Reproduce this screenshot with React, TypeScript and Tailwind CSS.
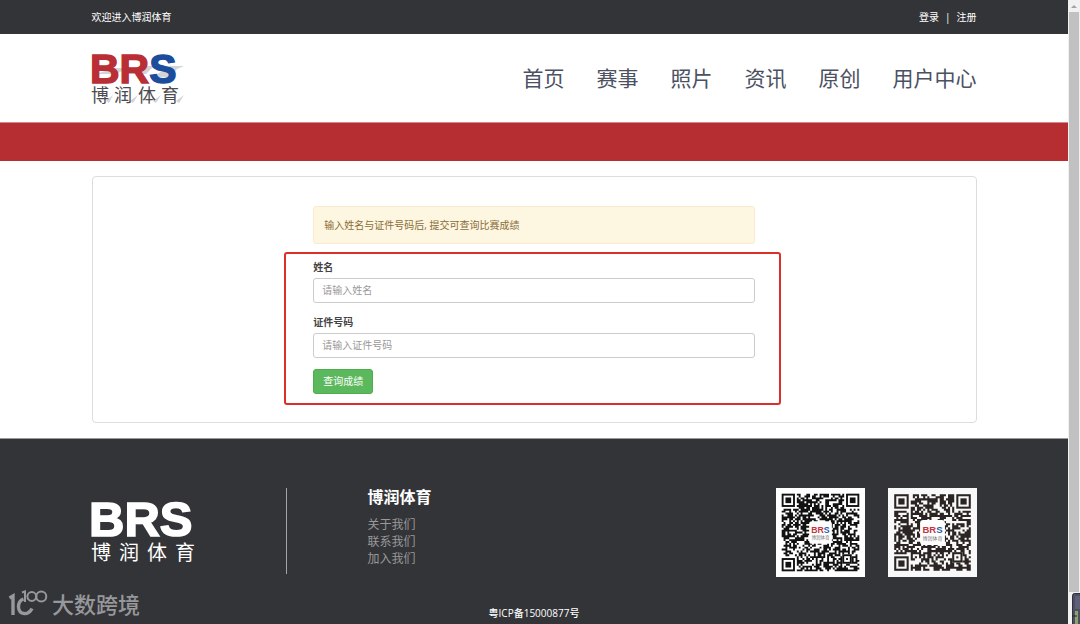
import React, { useMemo } from 'react';

const NAV_ITEMS = ['首页', '赛事', '照片', '资讯', '原创', '用户中心'];
const ABOUT_LINKS = ['关于我们', '联系我们', '加入我们'];
const LATIN = '"Liberation Sans", sans-serif';
const LOGO_CJK = '"Liberation Sans", "Noto Sans CJK SC", sans-serif';

const HeaderLogo: React.FC = () => (
  <svg className="-ml-1 block" width="100" height="70" viewBox="-4 -7 100 70" role="img" aria-label="博润体育">
    <g fill="#d3d4d8">
      <path d="M4 24 L22 18 H36 L24 24Z M34 24 L50 16 H62 L54 24Z M62 26 L78 16 H92 L85 19 L78 27 H64Z" />
      <path d="M14 51 L21 45 L17 53Z M38 51 L46 45 L41 53Z M61 51 L69 45 L64 53Z M84 51 L92 45 L87 53Z" />
    </g>
    <text x="-2" y="33" fontFamily={LATIN} fontSize="41" fontWeight="700" strokeWidth="1.4">
      <tspan fill="#b92f35" stroke="#b92f35">BR</tspan>
      <tspan fill="#1c4c9c" stroke="#1c4c9c">S</tspan>
    </text>
    <g fontFamily={LOGO_CJK} fontSize="18" fill="#4c4c50">
      <text x="-1" y="52">博</text>
      <text x="22" y="52">润</text>
      <text x="46" y="52">体</text>
      <text x="69" y="52">育</text>
    </g>
  </svg>
);

const FooterLogo: React.FC = () => (
  <svg className="-ml-1 block" width="112" height="82" viewBox="-4 -6 112 82" role="img" aria-label="博润体育" fill="#fff">
    <text x="-3" y="40" fontFamily={LATIN} fontSize="49" fontWeight="700" stroke="#fff" strokeWidth="1.6">BRS</text>
    <g fontFamily={LOGO_CJK} fontSize="20">
      <text x="-1" y="64">博</text>
      <text x="27" y="64">润</text>
      <text x="55" y="64">体</text>
      <text x="83" y="64">育</text>
    </g>
  </svg>
);

type QrCodeProps = { size: number; seed: number; color: string; background: string; label: string };

const buildModules = (size: number, seed: number) => {
  let state = seed;
  let d = '';
  const mid = (size - 1) / 2;
  for (let y = 0; y < size; y++) {
    for (let x = 0; x < size; x++) {
      state = (Math.imul(state, 1664525) + 1013904223) >>> 0;
      const inFinder = (x < 8 && y < 8) || (x > size - 9 && y < 8) || (x < 8 && y > size - 9);
      const inLogo = Math.abs(x - mid) < 6 && Math.abs(y - mid) < 6;
      const inAlign = Math.abs(x - (size - 7)) < 3 && Math.abs(y - (size - 7)) < 3;
      if (inFinder || inLogo || inAlign) continue;
      if ((state >>> 24) % 100 < 54) d += `M${x} ${y}h1v1h-1z`;
    }
  }
  return d;
};

const QrCode: React.FC<QrCodeProps> = ({ size, seed, color, background, label }) => {
  const modules = useMemo(() => buildModules(size, seed), [size, seed]);
  const full = size + 6;
  const mid = size / 2;
  const corners = [[0, 0], [size - 7, 0], [0, size - 7]];

  return (
    <svg width="89" height="89" viewBox={`-3 -3 ${full} ${full}`} role="img" aria-label={label}>
      <rect x="-3" y="-3" width={full} height={full} fill={background} />
      <path d={modules} fill={color} />
      {corners.map(([x, y]) => (
        <g key={`${x}-${y}`}>
          <rect x={x + 0.5} y={y + 0.5} width="6" height="6" fill="none" stroke={color} />
          <rect x={x + 2} y={y + 2} width="3" height="3" fill={color} />
        </g>
      ))}
      <rect x={size - 8.5} y={size - 8.5} width="4" height="4" fill="none" stroke={color} />
      <rect x={size - 7} y={size - 7} width="1" height="1" fill={color} />
      <rect x={mid - 6} y={mid - 6} width="12" height="12" rx="1.5" fill="#fff" />
      <text x={mid} y={mid + 0.3} textAnchor="middle" fontFamily={LATIN} fontSize="4.6" fontWeight="700">
        <tspan fill="#c4343b">BR</tspan>
        <tspan fill="#2c5aa8">S</tspan>
      </text>
      <text x={mid} y={mid + 3.6} textAnchor="middle" fontFamily={LOGO_CJK} fontSize="2.4" fill="#777">博润体育</text>
    </svg>
  );
};

type FieldProps = { id: string; label: string; placeholder: string };

const Field: React.FC<FieldProps> = ({ id, label, placeholder }) => (
  <div className="mb-[11px]">
    <label htmlFor={id} className="mb-[3px] block text-[10px] leading-4 font-bold text-[#444]">
      {label}
    </label>
    <input
      id={id}
      type="text"
      placeholder={placeholder}
      className="block h-[25px] w-full rounded-[3px] border border-[#ccc] bg-white px-2 pb-0.5 text-[10px] text-[#555] placeholder:text-[#999]"
    />
  </div>
);

const ScrollRail: React.FC = () => (
  <div className="flex w-3 shrink-0 flex-col items-center bg-[#f1f1f1]" aria-hidden="true">
    <svg width="12" height="12" viewBox="0 0 12 12">
      <path d="M3 8 L6 5 L9 8Z" fill="#a3a3a3" />
    </svg>
    <div className="w-[10px] flex-1 bg-[#c1c1c1]" />
    <svg width="12" height="32" viewBox="0 0 12 32">
      <rect x="4.5" y="1.5" width="12" height="34" rx="2" fill="#4c4f62" stroke="#2f313c" />
      <rect x="7" y="4" width="5" height="13" fill="#5d6078" />
      <rect x="7" y="19" width="3" height="13" fill="#8fa06a" />
      <path d="M4 24h5" stroke="#23252e" />
    </svg>
  </div>
);

const Watermark: React.FC = () => (
  <div className="absolute bottom-[5px] left-2 flex items-center gap-1 text-[#97989b]">
    <svg width="40" height="30" viewBox="0 0 40 30" fill="none" stroke="currentColor" aria-hidden="true">
      <path d="M1.5 9 L5 7 V26" strokeWidth="3.4" />
      <path d="M15.5 10 C12.5 11 10.5 14 10.5 18 C11 26.5 20.5 26.5 24 19.5" strokeWidth="3.4" />
      <path d="M14 3.5 L17 2.5 V13" strokeWidth="2" />
      <circle cx="23.8" cy="7.5" r="4.4" strokeWidth="2" />
      <circle cx="33.3" cy="7.5" r="5" strokeWidth="2" />
    </svg>
    <span className="text-[22px] leading-7 font-medium">大数跨境</span>
  </div>
);

const App: React.FC = () => {
  return (
    <div className="relative flex h-screen overflow-hidden bg-white font-['Open_Sans','Noto_Sans_CJK_SC',sans-serif]">
      <div className="flex min-w-0 flex-1 flex-col">
        <div className="bg-[#333438] text-[10px] text-white">
          <div className="mx-auto flex h-[34px] max-w-[885px] items-center justify-between">
            <span>欢迎进入博润体育</span>
            <div className="flex items-center gap-1.5">
              <a href="#login">登录</a>
              <span>|</span>
              <a href="#register">注册</a>
            </div>
          </div>
        </div>

        <header className="mx-auto flex h-[88px] w-full max-w-[885px] shrink-0 items-center justify-between">
          <a href="#home">
            <HeaderLogo />
          </a>
          <nav className="flex gap-8 pt-0.5 text-[21px] font-normal text-[#4b5162]">
            {NAV_ITEMS.map(item => (
              <a key={item} href="#nav">{item}</a>
            ))}
          </nav>
        </header>

        <div className="h-[39px] shrink-0 border-t border-[#d5898c] bg-[#b72e32]" />

        <main className="mx-auto my-[15px] w-full max-w-[885px] rounded border border-[#ddd] pt-[29px] pb-[17px]">
          <form className="mx-auto w-1/2" onSubmit={e => e.preventDefault()}>
            <div className="mb-2 rounded-[3px] border border-[#faebcc] bg-[#fdf6e0] px-[10px] py-[10px] text-[10px] leading-4 text-[#8a6d3b]">
              输入姓名与证件号码后, 提交可查询比赛成绩
            </div>
            <div className="-mr-[26px] -ml-[29px] rounded-[3px] border-2 border-[#dd2f29] pt-[5px] pr-6 pb-[9px] pl-[27px]">
              <Field id="name" label="姓名" placeholder="请输入姓名" />
              <Field id="id-number" label="证件号码" placeholder="请输入证件号码" />
              <button type="submit" className="block h-[25px] rounded-[3px] border border-[#4cae4c] bg-[#5cb85c] px-[9px] text-[10px] text-white">
                查询成绩
              </button>
            </div>
          </form>
        </main>

        <footer className="flex-1 border-t border-[#999] bg-[#333438] pt-[49px]">
          <div className="mx-auto flex max-w-[885px] items-start">
            <div className="flex h-[86px] w-[195px] items-center border-r border-[#a5a5a5]">
              <FooterLogo />
            </div>
            <div className="pl-[81px]">
              <h2 className="mb-[10px] text-base leading-[18px] font-bold text-white">博润体育</h2>
              <ul className="text-xs leading-[17px] text-[#999]">
                {ABOUT_LINKS.map(item => (
                  <li key={item}><a href="#about">{item}</a></li>
                ))}
              </ul>
            </div>
            <div className="ml-auto flex gap-[23px]">
              <QrCode size={41} seed={20150} color="#111" background="#fff" label="微信公众号" />
              <QrCode size={37} seed={8877} color="#2a2423" background="#f8f8f8" label="微信服务号" />
            </div>
          </div>
          <p className="mt-7 text-center text-[10px] leading-4 font-medium text-white">粤ICP备15000877号</p>
        </footer>
      </div>
      <ScrollRail />
      <Watermark />
    </div>
  );
};

export default App;
